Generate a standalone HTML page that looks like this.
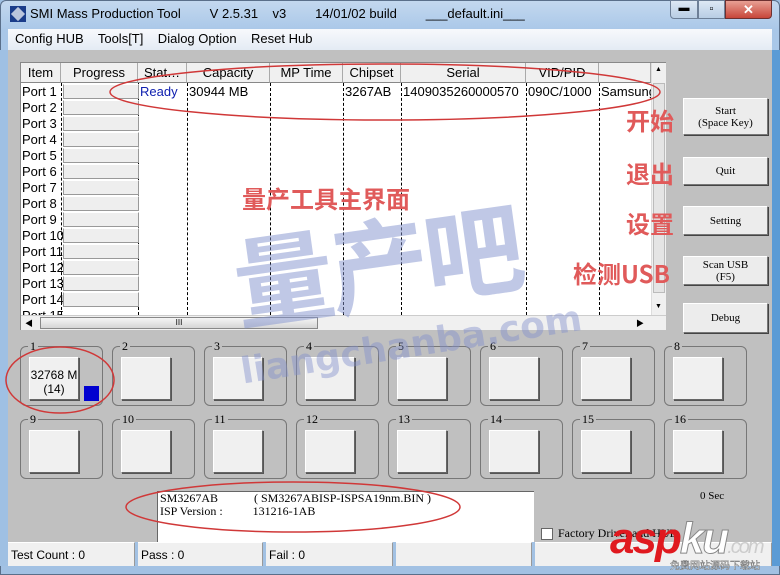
<!DOCTYPE html>
<html><head><meta charset="utf-8"><style>
*{margin:0;padding:0;box-sizing:border-box}
body{width:780px;height:575px;overflow:hidden;background:#9fc0e3;font-family:"Liberation Sans","Noto Sans CJK SC",sans-serif;position:relative}
.a{position:absolute}
.win{left:0;top:0;width:780px;height:575px;background:linear-gradient(#c3d8ef,#a9c7e8 30px,#a2c1e3);border:1px solid #5a6f8a;border-radius:6px 6px 0 0}
.menu{left:8px;top:29px;width:764px;height:21px;background:linear-gradient(#f7f9fc,#e4ebf4);font-size:13px;color:#000}
.client{left:8px;top:50px;width:764px;height:492px;background:#c0c0c0}
.tbl{left:20px;top:62px;width:646px;height:268px;background:#fff;border:1px solid #888}
.hd{top:0;height:20px;background:#f0f0f0;border-right:1px solid #aaa;border-bottom:1px solid #888;font-size:13px;text-align:center;line-height:19px}
.vl{top:20px;height:232px;border-left:1px dashed #000}
.port{left:1px;font-size:13px;height:16px;line-height:16px}
.pb{left:42px;width:76px;height:15px;background:#eee;border:1px solid #999;border-top-color:#fff}
.btn{left:683px;width:85px;background:#ececec;border:1px solid #777;border-top-color:#fff;border-left-color:#fff;box-shadow:1px 1px 0 #444;font-family:"Liberation Serif",serif;font-size:11px;text-align:center;display:flex;align-items:center;justify-content:center;line-height:12px}
.grp{width:83px;height:60px;border:1px solid #777;border-radius:6px}
.grp span{position:absolute;left:7px;top:-8px;background:#c0c0c0;padding:0 2px;font-family:"Liberation Serif",serif;font-size:12px}
.grp i{position:absolute;left:8px;top:10px;width:50px;height:43px;background:#f0f0f0;border:1px solid #666;border-top-color:#fff;border-left-color:#fff;box-shadow:1px 1px 0 #555}
.red{color:#e05a5a;font-weight:bold;font-size:24px;font-family:"Noto Sans CJK SC",sans-serif}
.sb{top:542px;height:24px;background:#f0f0f0;border-right:1px solid #999;border-top:1px solid #fff;font-size:12px;line-height:24px;padding-left:3px}
</style></head><body>
<div class="a win"></div>
<div class="a" style="left:10px;top:6px;width:16px;height:16px;background:#1a3c8a"><div class="a" style="left:3px;top:3px;width:10px;height:10px;background:#fff;transform:rotate(45deg);opacity:.7"></div></div>
<div class="a" style="left:30px;top:6px;font-size:13px;white-space:pre">SMI Mass Production Tool        V 2.5.31    v3        14/01/02 build        ___default.ini___</div>
<div class="a" style="left:670px;top:0;width:28px;height:19px;background:linear-gradient(#dde8f4,#b8cde4);border:1px solid #6d7f97;border-radius:0 0 0 4px;font-size:11px;text-align:center;line-height:15px">▬</div>
<div class="a" style="left:698px;top:0;width:27px;height:19px;background:linear-gradient(#dde8f4,#b8cde4);border:1px solid #6d7f97;font-size:11px;text-align:center;line-height:17px">▫</div>
<div class="a" style="left:725px;top:0;width:47px;height:19px;background:linear-gradient(#e8a094,#c7463a);border:1px solid #6d3030;border-radius:0 0 4px 0;color:#fff;font-weight:bold;text-align:center;line-height:18px;font-size:13px">✕</div>
<div class="a menu"><span class="a" style="left:7px;top:2px;white-space:pre">Config HUB    Tools[T]    Dialog Option    Reset Hub</span></div>
<div class="a client"></div>
<div class="a tbl">
<div class="a hd" style="left:0;width:40px">Item</div>
<div class="a hd" style="left:40px;width:77px">Progress</div>
<div class="a hd" style="left:117px;width:49px">Stat…</div>
<div class="a hd" style="left:166px;width:83px">Capacity</div>
<div class="a hd" style="left:249px;width:73px">MP Time</div>
<div class="a hd" style="left:322px;width:58px">Chipset</div>
<div class="a hd" style="left:380px;width:125px">Serial</div>
<div class="a hd" style="left:505px;width:73px">VID/PID</div>
<div class="a hd" style="left:578px;width:52px"></div>
<div class="a vl" style="left:40px"></div><div class="a vl" style="left:117px"></div><div class="a vl" style="left:166px"></div><div class="a vl" style="left:249px"></div><div class="a vl" style="left:322px"></div><div class="a vl" style="left:380px"></div><div class="a vl" style="left:505px"></div><div class="a vl" style="left:578px"></div>
<div class="a port" style="top:21px">Port 1</div><div class="a pb" style="top:21px"></div>
<div class="a port" style="top:37px">Port 2</div><div class="a pb" style="top:37px"></div>
<div class="a port" style="top:53px">Port 3</div><div class="a pb" style="top:53px"></div>
<div class="a port" style="top:69px">Port 4</div><div class="a pb" style="top:69px"></div>
<div class="a port" style="top:85px">Port 5</div><div class="a pb" style="top:85px"></div>
<div class="a port" style="top:101px">Port 6</div><div class="a pb" style="top:101px"></div>
<div class="a port" style="top:117px">Port 7</div><div class="a pb" style="top:117px"></div>
<div class="a port" style="top:133px">Port 8</div><div class="a pb" style="top:133px"></div>
<div class="a port" style="top:149px">Port 9</div><div class="a pb" style="top:149px"></div>
<div class="a port" style="top:165px">Port 10</div><div class="a pb" style="top:165px"></div>
<div class="a port" style="top:181px">Port 11</div><div class="a pb" style="top:181px"></div>
<div class="a port" style="top:197px">Port 12</div><div class="a pb" style="top:197px"></div>
<div class="a port" style="top:213px">Port 13</div><div class="a pb" style="top:213px"></div>
<div class="a port" style="top:229px">Port 14</div><div class="a pb" style="top:229px"></div>
<div class="a port" style="top:245px;height:7px;overflow:hidden">Port 15</div>
<div class="a" style="left:119px;top:21px;font-size:13px;color:#1020b0">Ready</div>
<div class="a" style="left:168px;top:21px;font-size:13px">30944 MB</div>
<div class="a" style="left:324px;top:21px;font-size:13px">3267AB</div>
<div class="a" style="left:382px;top:21px;font-size:13px">1409035260000570</div>
<div class="a" style="left:507px;top:21px;font-size:13px">090C/1000</div>
<div class="a" style="left:580px;top:21px;font-size:13px;width:50px;overflow:hidden;white-space:nowrap">Samsung</div>
<div class="a" style="left:630px;top:0;width:15px;height:252px;background:#f0f0f0;border-left:1px solid #ddd"><div class="a" style="left:1px;top:20px;width:12px;height:210px;background:#e4e4e4;border:1px solid #bbb"></div><div class="a" style="left:3px;top:3px;font-size:7px">▲</div><div class="a" style="left:3px;top:240px;font-size:7px">▼</div></div>
<div class="a" style="left:0;top:252px;width:645px;height:15px;background:#f0f0f0;border-top:1px solid #ccc"><div class="a" style="left:4px;top:2px;font-size:8px">◀</div><div class="a" style="left:19px;top:1px;width:278px;height:12px;background:linear-gradient(#f5f5f5,#d5d5d5);border:1px solid #888;font-size:8px;text-align:center;line-height:10px">III</div><div class="a" style="left:615px;top:2px;font-size:8px">▶</div></div>
</div>
<div class="a btn" style="top:98px;height:37px">Start<br>(Space Key)</div>
<div class="a btn" style="top:157px;height:28px">Quit</div>
<div class="a btn" style="top:206px;height:29px">Setting</div>
<div class="a btn" style="top:256px;height:29px">Scan USB<br>(F5)</div>
<div class="a btn" style="top:303px;height:30px">Debug</div>
<div class="a" style="left:772px;top:50px;width:8px;height:516px;background:#5b9bd5"></div>
<div class="a" style="left:0;top:50px;width:8px;height:516px;background:#9fc0e3"></div>

<div class="a grp" style="left:20px;top:346px"><span>1</span><i style="font-family:'Liberation Sans';font-size:12px;text-align:center;padding-top:10px;font-style:normal;line-height:14px">32768 M<br>(14)</i><b class="a" style="left:63px;top:39px;width:15px;height:15px;background:#0000d0"></b></div>
<div class="a grp" style="left:112px;top:346px"><span>2</span><i></i></div>
<div class="a grp" style="left:204px;top:346px"><span>3</span><i></i></div>
<div class="a grp" style="left:296px;top:346px"><span>4</span><i></i></div>
<div class="a grp" style="left:388px;top:346px"><span>5</span><i></i></div>
<div class="a grp" style="left:480px;top:346px"><span>6</span><i></i></div>
<div class="a grp" style="left:572px;top:346px"><span>7</span><i></i></div>
<div class="a grp" style="left:664px;top:346px"><span>8</span><i></i></div>
<div class="a grp" style="left:20px;top:419px"><span>9</span><i></i></div>
<div class="a grp" style="left:112px;top:419px"><span>10</span><i></i></div>
<div class="a grp" style="left:204px;top:419px"><span>11</span><i></i></div>
<div class="a grp" style="left:296px;top:419px"><span>12</span><i></i></div>
<div class="a grp" style="left:388px;top:419px"><span>13</span><i></i></div>
<div class="a grp" style="left:480px;top:419px"><span>14</span><i></i></div>
<div class="a grp" style="left:572px;top:419px"><span>15</span><i></i></div>
<div class="a grp" style="left:664px;top:419px"><span>16</span><i></i></div>

<div class="a" style="left:157px;top:491px;width:377px;height:51px;background:#fff;border-left:1px solid #666;border-top:1px solid #666;font-family:'Liberation Serif',serif;font-size:12px;line-height:13px;padding-left:2px;white-space:pre">SM3267AB            ( SM3267ABISP-ISPSA19nm.BIN )
ISP Version :          131216-1AB</div>
<div class="a" style="left:700px;top:490px;font-family:'Liberation Serif',serif;font-size:11px">0 Sec</div>
<div class="a" style="left:541px;top:528px;width:12px;height:12px;background:#fff;border:1px solid #666"></div>
<div class="a" style="left:558px;top:526px;font-family:'Liberation Serif',serif;font-size:12px">Factory Driver and HUB</div>

<div class="a sb" style="left:8px;width:127px">Test Count : 0</div>
<div class="a sb" style="left:138px;width:125px">Pass : 0</div>
<div class="a sb" style="left:266px;width:127px">Fail : 0</div>
<div class="a sb" style="left:396px;width:136px"></div>
<div class="a sb" style="left:535px;width:237px"></div>

<div class="a" style="left:232px;top:205px;font-size:100px;font-weight:bold;color:rgba(130,145,205,.5);transform:rotate(-8deg);font-family:'Noto Sans CJK SC',sans-serif;letter-spacing:-4px;line-height:110px">量产吧</div>
<div class="a" style="left:238px;top:352px;font-size:36px;color:rgba(130,145,205,.45);transform:rotate(-9deg);transform-origin:left top;font-family:'DejaVu Sans',sans-serif;font-weight:bold">liangchanba.com</div>

<div class="a red" style="left:242px;top:180px">量产工具主界面</div>
<div class="a red" style="left:626px;top:102px">开始</div>
<div class="a red" style="left:626px;top:155px">退出</div>
<div class="a red" style="left:626px;top:205px">设置</div>
<div class="a red" style="left:573px;top:255px">检测USB</div>

<svg class="a" style="left:0;top:0" width="780" height="575">
<ellipse cx="385" cy="92" rx="275" ry="28" fill="none" stroke="#d03838" stroke-width="1.5"/>
<ellipse cx="60" cy="380" rx="54" ry="33" fill="none" stroke="#d03838" stroke-width="1.5"/>
<ellipse cx="293" cy="507" rx="167" ry="25" fill="none" stroke="#d03838" stroke-width="1.5"/>
</svg>
<div class="a" style="left:610px;top:515px;font-size:44px;font-weight:bold;font-style:italic;color:#e0191f;letter-spacing:-2px;line-height:48px">asp<span style="color:#fff;-webkit-text-stroke:1px #888">ku</span><span style="font-size:20px;color:#ccc;font-weight:normal">.com</span></div>
<div class="a" style="left:670px;top:557px;font-size:10px;color:#fff;-webkit-text-stroke:.4px #666">免费网站源码下载站</div>
</body></html>
